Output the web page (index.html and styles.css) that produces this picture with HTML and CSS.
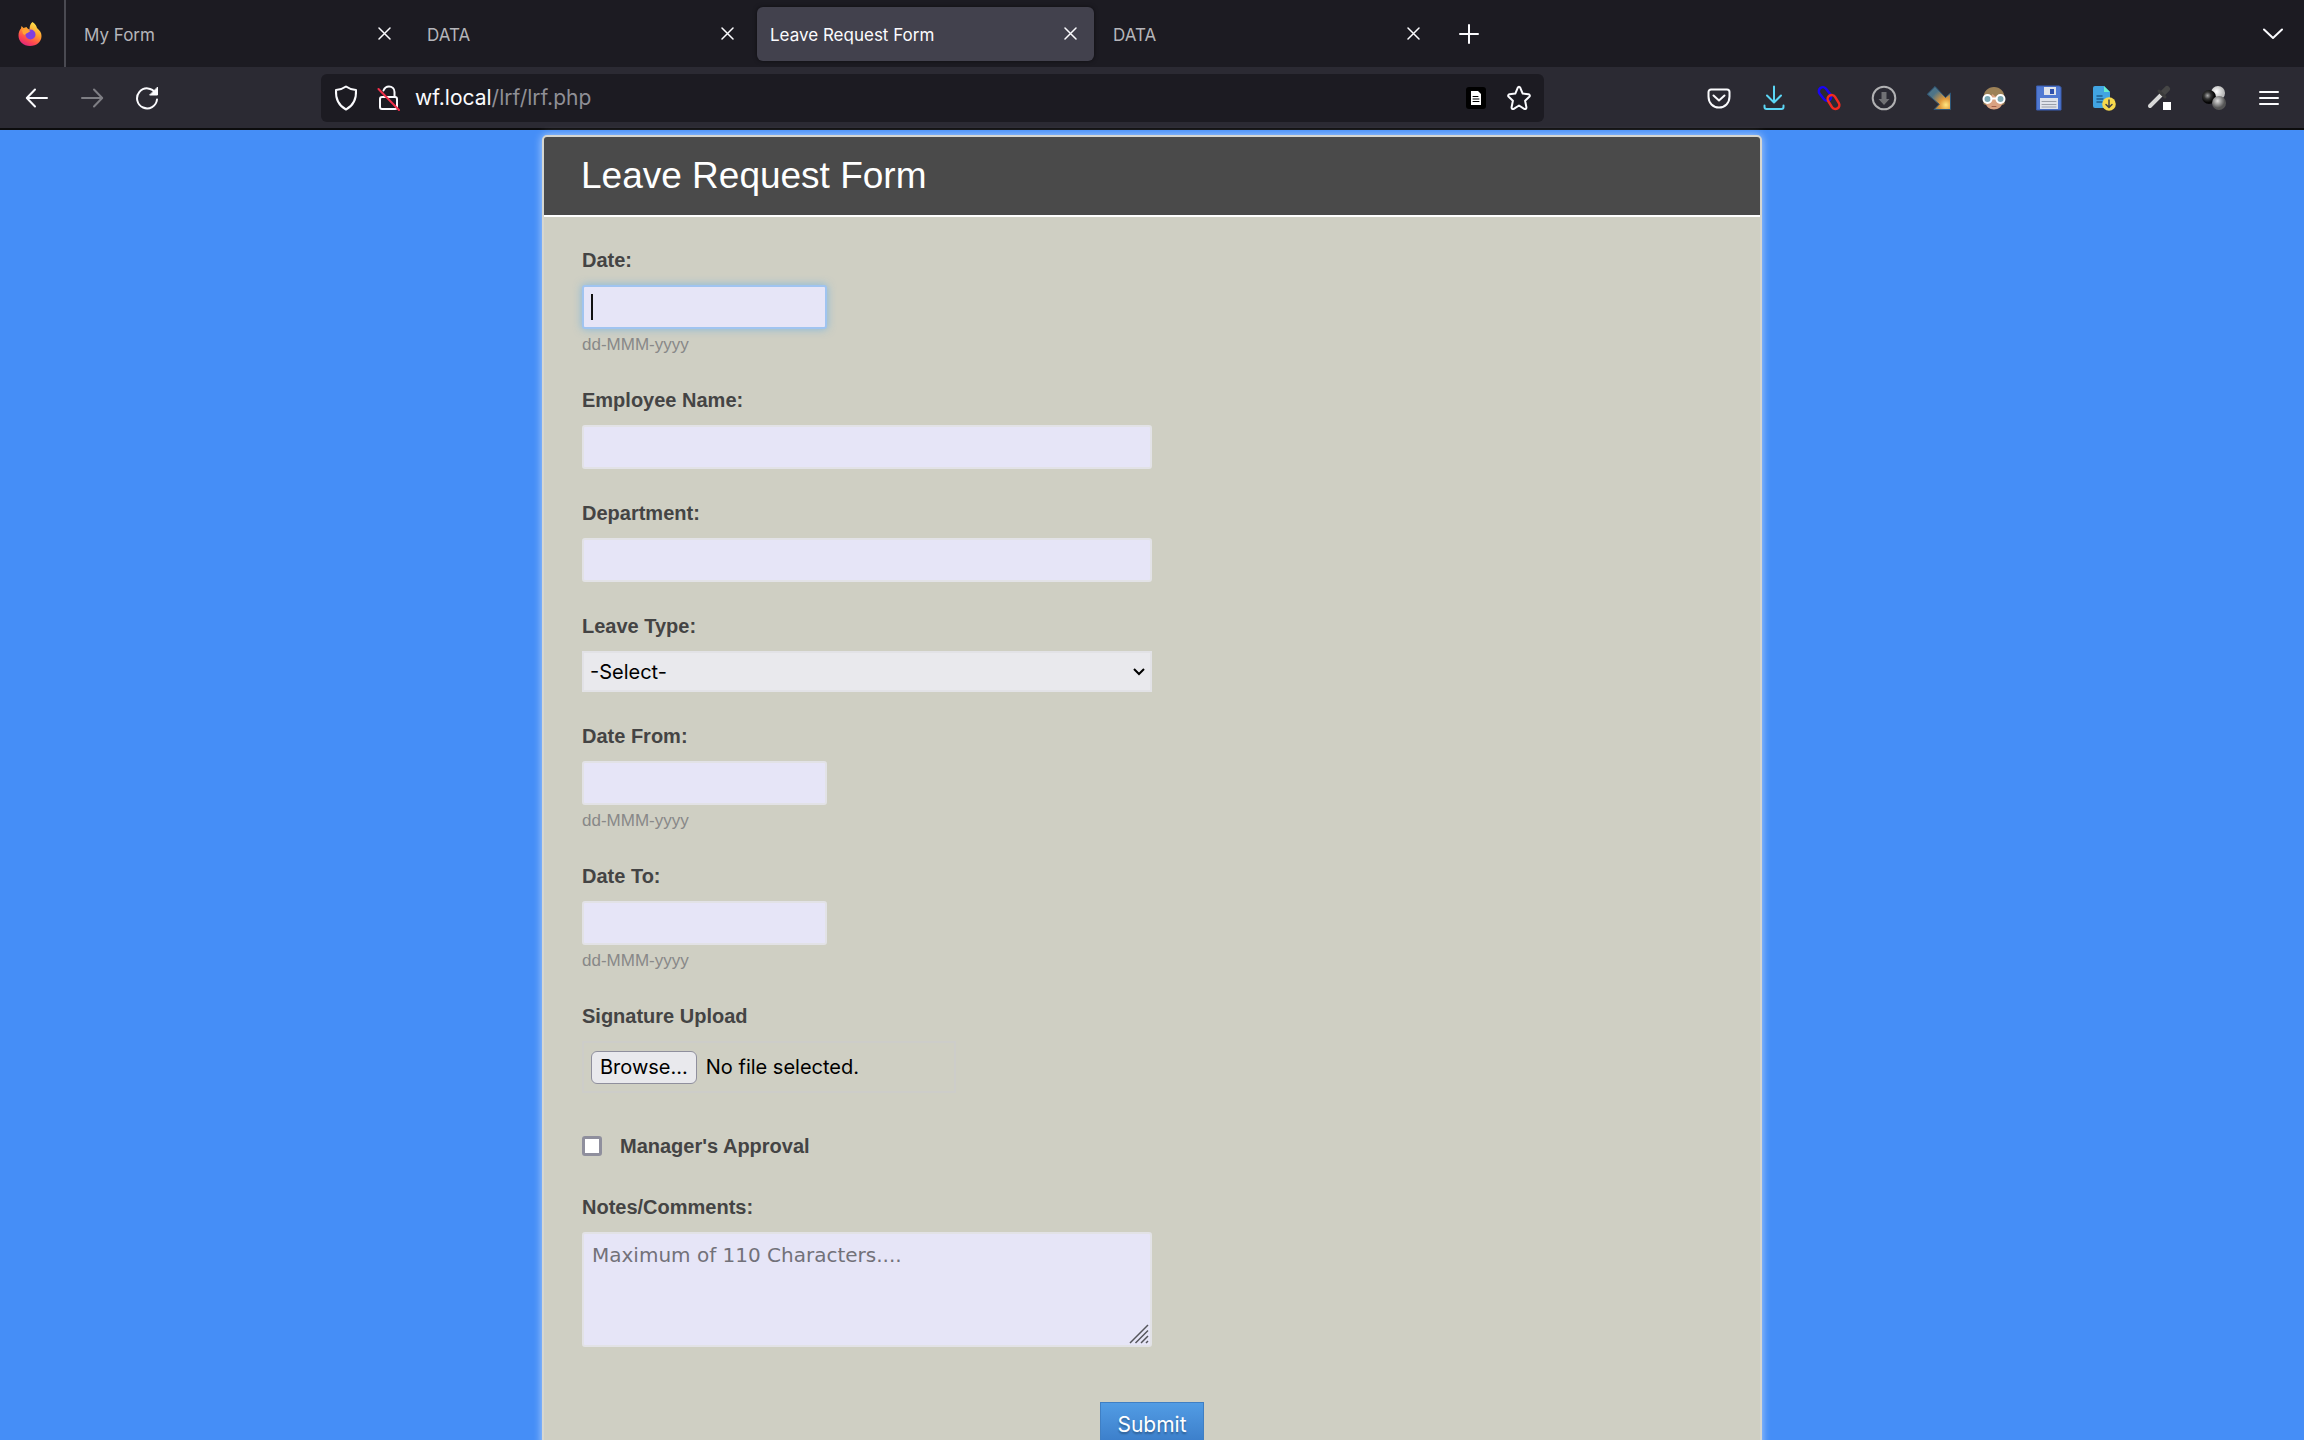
FILE: index.html
```html
<!DOCTYPE html>
<html lang="en">
<head>
    <meta charset="UTF-8">
    <meta name="viewport" content="width=device-width, initial-scale=1.0">
    <title>Leave Request Form</title>
    <link rel="stylesheet" href="styles.css">
</head>
<body>
    <header class="browser">
        <div class="tab-bar">
            <div class="logo">
                <svg width="24" height="26" viewBox="0 0 24 26">
                    <defs>
                        <linearGradient id="flame" x1="0.8" y1="0" x2="0.3" y2="1">
                            <stop offset="0" stop-color="#fff14f"/>
                            <stop offset="0.45" stop-color="#ff9a2e"/>
                            <stop offset="0.75" stop-color="#ff4b4e"/>
                            <stop offset="1" stop-color="#e0247d"/>
                        </linearGradient>
                    </defs>
                    <path fill="url(#flame)" d="M14.500 1c3 2 4 4 4.500 6 3 2.500 4.500 5 4.500 8 0 6-5 10-11.500 10S.500 20.500.500 14.500c0-3 1-5.500 2.500-7l.500-2.500 2 2 3-1c.500 1 1.500 2 3 2.500C11.500 5 12.500 2.500 14.500 1z"/>
                    <circle cx="12.500" cy="13.500" r="5" fill="#7f3fe0"/>
                    <path fill="#ffa436" d="M4 9c3-1.500 6-.500 8.500 1l-3 2c-1 .500-2 .500-2.500 2L5 13z"/>
                </svg>
            </div>
            <div class="tabs">
                <div class="tab"><span>My Form</span><button type="button" aria-label="Close tab"><svg width="13" height="13" viewBox="0 0 13 13"><path d="M1 1l11 11M12 1L1 12"/></svg></button></div>
                <div class="tab"><span>DATA</span><button type="button" aria-label="Close tab"><svg width="13" height="13" viewBox="0 0 13 13"><path d="M1 1l11 11M12 1L1 12"/></svg></button></div>
                <div class="tab active"><span>Leave Request Form</span><button type="button" aria-label="Close tab"><svg width="13" height="13" viewBox="0 0 13 13"><path d="M1 1l11 11M12 1L1 12"/></svg></button></div>
                <div class="tab"><span>DATA</span><button type="button" aria-label="Close tab"><svg width="13" height="13" viewBox="0 0 13 13"><path d="M1 1l11 11M12 1L1 12"/></svg></button></div>
            </div>
            <button type="button" class="icon-btn new-tab" aria-label="New tab"><svg width="20" height="20" viewBox="0 0 20 20"><path d="M10 1v18M1 10h18"/></svg></button>
            <button type="button" class="icon-btn all-tabs" aria-label="List all tabs"><svg width="20" height="12" viewBox="0 0 20 12"><path d="M1 1.500l9 8.500 9-8.500"/></svg></button>
        </div>

        <div class="toolbar">
            <button type="button" class="icon-btn" aria-label="Back"><svg width="24" height="24" viewBox="0 0 24 24"><path d="M22 12H2M10 3.500L1.800 12l8.200 8.500"/></svg></button>
            <button type="button" class="icon-btn dim" aria-label="Forward"><svg width="24" height="24" viewBox="0 0 24 24"><path d="M2 12h20M14 3.500l8.200 8.500-8.200 8.500"/></svg></button>
            <button type="button" class="icon-btn" aria-label="Reload"><svg width="24" height="24" viewBox="0 0 24 24"><path d="M20.500 7A10 10 0 1 0 22 13.500"/><path class="fill" d="M22.500 1.500v7.500H15z"/></svg></button>
            <div class="spacer"></div>
            <div class="url-bar">
                <svg width="24" height="26" viewBox="0 0 24 26"><path d="M12 1.500c3 2.200 6.500 3.300 10 3.500.500 8.500-2.500 15.500-10 19.500C4.500 20.500 1.500 13.500 2 5c3.500-.200 7-1.300 10-3.500z"/></svg>
                <svg class="lock" width="24" height="26" viewBox="0 0 24 26"><rect x="3" y="12" width="17" height="12" rx="2"/><path d="M6.500 5.500C7.500 3 9.500 1.500 12 1.500c3 0 5.500 2 5.500 5.500v5"/><path class="slash" d="M1.500 4l20.500 21"/></svg>
                <div class="url"><span class="host">wf.local</span>/lrf/lrf.php</div>
                <svg class="reader" width="20" height="22" viewBox="0 0 20 22"><rect width="20" height="22" rx="3"/><path class="sheet" d="M5 4h7l3 3v11H5z"/><path class="lines" d="M7 9.500h5M7 12h6M7 14.500h6"/></svg>
                <svg width="24" height="26" viewBox="0 0 24 26"><path d="M12 1.800c.600 0 1 .400 1.300 1l2.400 5.800 5.800.700c1.300.200 1.800 1.500.800 2.500l-4.200 4 1.300 6.400c.200 1.500-1 2.300-2.200 1.600L12 20.500l-5.200 3.300c-1.200.700-2.400-.100-2.200-1.600l1.300-6.400-4.200-4c-1-1-.500-2.300.800-2.500l5.800-.700 2.400-5.800c.300-.600.700-1 1.300-1z"/></svg>
            </div>
            <div class="spacer"></div>
            <button type="button" class="icon-btn" aria-label="Pocket"><svg width="24" height="24" viewBox="0 0 24 24"><path d="M4 3.500h16a2.500 2.500 0 0 1 2.500 2.500v4.500C22.500 17 18 21.500 12 21.500S1.500 17 1.500 10.500V6A2.500 2.500 0 0 1 4 3.500z"/><path d="M6.500 9.500l5.500 5 5.500-5"/></svg></button>
            <button type="button" class="icon-btn cyan" aria-label="Downloads"><svg width="24" height="26" viewBox="0 0 24 26"><path d="M12 1.500V17M5 10.500l7 7 7-7M2.500 20.500v1.500a2 2 0 0 0 2 2h15a2 2 0 0 0 2-2v-1.500"/></svg></button>
            <button type="button" class="icon-btn" aria-label="Link"><svg width="26" height="26" viewBox="0 0 26 26"><rect x="1.500" y="5" width="15" height="8" rx="4" transform="rotate(52 9 9)" stroke="#1a05f5" stroke-width="2.500"/><rect x="10" y="13" width="15" height="8" rx="4" transform="rotate(58 17.500 17)" stroke="#f22a20" stroke-width="2.500"/></svg></button>
            <button type="button" class="icon-btn" aria-label="Save page"><svg width="26" height="26" viewBox="0 0 26 26"><circle cx="13" cy="13" r="11.300" stroke="#b1b1b3"/><path fill="#717174" stroke="none" d="M10.500 7h5v7h3L13 20l-5.500-6h3z"/></svg></button>
            <button type="button" class="icon-btn" aria-label="Download manager"><svg width="26" height="26" viewBox="0 0 26 26">
                <defs>
                    <radialGradient id="glow" cx="0.8" cy="0.800" r="0.700">
                        <stop offset="0" stop-color="#ffe680"/>
                        <stop offset="0.400" stop-color="#e0983a"/>
                        <stop offset="1" stop-color="#4d7488"/>
                    </radialGradient>
                </defs>
                <path fill="url(#glow)" stroke="#2d5678" stroke-width="1" d="M1.500 9L9 1.500l10.500 11L24.500 8v16.500H8l5-5z"/></svg></button>
            <button type="button" class="icon-btn" aria-label="Account"><svg width="26" height="26" viewBox="0 0 26 26"><path fill="#9c8157" stroke="none" d="M2.500 13C2.500 6 7 2 13 2s10.500 4 10.500 11v6l-2 1h-17l-2-1z"/><path fill="#d9a282" stroke="none" d="M4.500 13c4 0 6-2 7-4 3 3 6 4 10 4v4c0 4.500-4 7.500-8.500 7.500S4.500 21.500 4.500 17z"/><circle cx="6.500" cy="14" r="4" fill="#7ba8b4" stroke="#fff"/><circle cx="19.500" cy="14" r="4" fill="#7ba8b4" stroke="#fff"/><path stroke="#fff" d="M10.500 13.500h5"/><path stroke="#a5604b" stroke-width="1" d="M11 21.500h4"/></svg></button>
            <button type="button" class="icon-btn" aria-label="Save"><svg width="26" height="26" viewBox="0 0 26 26"><path fill="#5079d2" stroke="#3b5fb5" stroke-width="1" d="M1 1h22.500L25 2.500V25H1z"/><path fill="#dfe3ea" stroke="none" d="M8 2h12v8H8zM4 13h18v11H4z"/><path fill="#2f51ad" stroke="none" d="M14 4h4v5h-4z"/><path stroke="#9aa0aa" stroke-width="1" d="M6 16.500h14M6 19.500h14M6 22h14"/></svg></button>
            <button type="button" class="icon-btn" aria-label="Export document"><svg width="26" height="26" viewBox="0 0 26 26"><path fill="#41a4e2" stroke="none" d="M4 1h9l6 6v16H4a2 2 0 0 1-2-2V3a2 2 0 0 1 2-2z"/><path fill="#67eccb" stroke="none" d="M13 1l6 6h-6z"/><path stroke="#1d5c8d" stroke-width="1.500" d="M6 11h5M6 14h6M6 17h5"/><circle cx="18" cy="19" r="6.800" fill="#f7d94c" stroke="none"/><path stroke="#42434a" stroke-width="1.500" d="M18 15v7M15 19.500l3 3 3-3"/></svg></button>
            <button type="button" class="icon-btn" aria-label="Colour picker"><svg width="26" height="26" viewBox="0 0 26 26"><path stroke="#d8d8d8" stroke-width="4" d="M4 21L15 10"/><path stroke="#464646" stroke-width="6" d="M17 8l4-4"/><path stroke="#3c3c3c" stroke-width="3" d="M13 6l6 6"/><path fill="#fff" stroke="none" d="M17 17h8v8h-8z"/></svg></button>
            <button type="button" class="icon-btn" aria-label="Spheres"><svg width="26" height="26" viewBox="0 0 26 26">
                <defs>
                    <radialGradient id="dark" cx="0.400" cy="0.400"><stop offset="0" stop-color="#aaa"/><stop offset="0.500" stop-color="#333"/><stop offset="1" stop-color="#050505"/></radialGradient>
                    <radialGradient id="light" cx="0.400" cy="0.400"><stop offset="0" stop-color="#fff"/><stop offset="1" stop-color="#bbb"/></radialGradient>
                    <radialGradient id="grey" cx="0.400" cy="0.350"><stop offset="0" stop-color="#ddd"/><stop offset="1" stop-color="#555"/></radialGradient>
                </defs>
                <circle cx="17" cy="8" r="7" fill="url(#light)" stroke="none"/><circle cx="8" cy="12" r="7" fill="url(#dark)" stroke="none"/><circle cx="18" cy="18" r="7" fill="url(#grey)" stroke="none"/></svg></button>
            <button type="button" class="icon-btn" aria-label="Menu"><svg width="20" height="18" viewBox="0 0 20 18"><path d="M1 3h18M1 9h18M1 15h18"/></svg></button>
        </div>
    </header>

    <main class="page">
        <div class="panel">
            <h1>Leave Request Form</h1>
            <form>
                <div class="field">
                    <label for="date">Date:</label>
                    <div class="caret-box">
                        <input type="text" id="date" class="short focused">
                        <span class="caret"></span>
                    </div>
                    <p class="hint">dd-MMM-yyyy</p>
                </div>
                <div class="field">
                    <label for="name">Employee Name:</label>
                    <input type="text" id="name">
                </div>
                <div class="field">
                    <label for="department">Department:</label>
                    <input type="text" id="department">
                </div>
                <div class="field">
                    <label for="type">Leave Type:</label>
                    <div class="select-box">
                        <select id="type">
                            <option>-Select-</option>
                        </select>
                        <svg width="12" height="8" viewBox="0 0 12 8"><path d="M1 1l5 5 5-5"/></svg>
                    </div>
                </div>
                <div class="field">
                    <label for="from">Date From:</label>
                    <input type="text" id="from" class="short">
                    <p class="hint">dd-MMM-yyyy</p>
                </div>
                <div class="field">
                    <label for="to">Date To:</label>
                    <input type="text" id="to" class="short">
                    <p class="hint">dd-MMM-yyyy</p>
                </div>
                <div class="field">
                    <label for="signature">Signature Upload</label>
                    <div class="upload">
                        <input type="file" id="signature" hidden>
                        <button type="button" onclick="document.getElementById('signature').click()">Browse...</button>
                        <span>No file selected.</span>
                    </div>
                </div>
                <div class="field check">
                    <input type="checkbox" id="approval">
                    <label for="approval">Manager's Approval</label>
                </div>
                <div class="field">
                    <label for="notes">Notes/Comments:</label>
                    <div class="notes-box">
                        <textarea id="notes" maxlength="110" placeholder="Maximum of 110 Characters...."></textarea>
                        <svg width="20" height="20" viewBox="0 0 20 20"><path d="M1 19L19 1M6.500 19L19 6.500M12 19l7-7M17 19l2-2"/></svg>
                    </div>
                </div>
                <div class="actions">
                    <button type="submit" class="submit">Submit</button>
                </div>
            </form>
        </div>
    </main>
</body>
</html>
```
FILE: styles.css
```css
* {
    box-sizing: border-box;
}

body {
    margin: 0;
    height: 100vh;
    display: flex;
    flex-direction: column;
    overflow: hidden;
    background: #458ef7;
    font-family: "Liberation Sans", Arial, sans-serif;
}

button {
    font-family: inherit;
    cursor: pointer;
}

/* Browser bars */
.browser {
    flex: none;
    font-family: Inter, sans-serif;
    color: #fbfbfe;
    border-bottom: 2px solid #0c0c0d;
}

.browser svg {
    flex: none;
    display: block;
    fill: none;
    stroke: #fbfbfe;
    stroke-width: 2;
    stroke-linecap: round;
    stroke-linejoin: round;
}

.tab-bar {
    display: flex;
    align-items: center;
    height: 67px;
    background: #1c1b22;
}

.logo {
    display: flex;
    align-items: center;
    justify-content: flex-end;
    width: 66px;
    height: 100%;
    padding-right: 22px;
    border-right: 2px solid #4a4a52;
}

.browser .logo svg {
    stroke: none;
}

.tabs {
    display: flex;
    flex: 0 1 1366px;
    gap: 6px;
    margin-left: 5px;
    margin-right: 12px;
}

.tab {
    flex: 1;
    display: flex;
    align-items: center;
    justify-content: space-between;
    height: 54px;
    padding: 0 12px 0 13px;
    border-radius: 6px;
    font-size: 17px;
    color: #b5b5ba;
}

.tab span {
    padding-top: 2px;
}

.tab.active {
    background: #42414d;
    color: #fbfbfe;
    box-shadow: 0 0 4px rgba(0, 0, 0, 0.5);
}

.tab button,
.icon-btn {
    display: flex;
    align-items: center;
    justify-content: center;
    padding: 0;
    border: none;
    background: none;
}

.tab button {
    width: 24px;
    height: 24px;
}

.browser .tab svg {
    stroke-width: 1.5;
}

.icon-btn {
    flex: none;
    width: 55px;
    height: 48px;
}

.new-tab {
    width: 40px;
}

.all-tabs {
    margin-left: auto;
    margin-right: 4px;
}

.toolbar {
    display: flex;
    align-items: center;
    height: 61px;
    padding: 0 8px 0 9px;
    background: #2b2a33;
}

.dim {
    opacity: 0.4;
}

.browser .cyan svg {
    stroke: #5bd6f5;
}

.browser .fill {
    fill: #fbfbfe;
    stroke-width: 1;
}

.spacer {
    flex: 0 1 147px;
}

.url-bar {
    flex: 1;
    display: flex;
    align-items: center;
    height: 48px;
    padding: 0 13px;
    border-radius: 6px;
    background: #1c1b22;
}

.url-bar .lock {
    margin: 0 14px 0 19px;
}

.lock .slash {
    stroke: #f2304a;
}

.url {
    flex: 1;
    font-size: 21px;
    color: #8f8f96;
}

.host {
    color: #fbfbfe;
}

.browser .reader {
    margin-right: 21px;
    fill: #000;
    stroke: none;
}

.reader .sheet {
    fill: #fff;
}

.reader .lines {
    stroke: #000;
    stroke-width: 1;
}

/* Form */
.page {
    flex: 1;
    min-height: 0;
    padding: 5px 20px 0;
}

.panel {
    max-width: 1220px;
    margin: 0 auto;
    border: 2px solid #d6d6d0;
    border-radius: 5px;
    background: #cfcfc3;
    box-shadow: 0 0 8px rgba(255, 255, 255, 0.6);
}

h1 {
    margin: 0;
    padding: 0 37px;
    border-bottom: 2px solid #fff;
    border-radius: 3px 3px 0 0;
    background: #4a4a4a;
    color: #fff;
    font-size: 37px;
    font-weight: normal;
    line-height: 78px;
}

form {
    display: flex;
    flex-direction: column;
    gap: 32px;
    padding: 31px 38px 40px;
}

.field label {
    display: block;
    margin-bottom: 13px;
    color: #444;
    font-size: 20px;
    font-weight: bold;
    line-height: 24px;
}

input[type="text"],
select,
textarea {
    display: block;
    width: 100%;
    max-width: 570px;
    height: 44px;
    margin: 0;
    padding: 8px;
    border: 2px solid #e2e2e6;
    border-radius: 3px;
    outline: none;
    background: #e6e5f7;
    color: #000;
    font-size: 20px;
}

input[type="text"].short {
    max-width: 245px;
}

input[type="text"].focused {
    border-color: #a0c4f0;
    box-shadow: 0 0 8px rgba(82, 168, 236, 0.6);
    caret-color: transparent;
}

.caret-box,
.select-box,
.notes-box {
    position: relative;
    max-width: 570px;
}

.caret {
    position: absolute;
    top: 9px;
    left: 9px;
    width: 2px;
    height: 26px;
    background: #111;
}

.hint {
    margin: 5px 0 0;
    color: #888;
    font-size: 17px;
    line-height: 22px;
}

.select-box select {
    appearance: none;
    height: 41px;
    padding: 0 6px;
    border-radius: 0;
    background: #e9e9ed;
    font-family: Inter, sans-serif;
}

.select-box svg {
    position: absolute;
    top: 17px;
    right: 7px;
    fill: none;
    stroke: #000;
    stroke-width: 2;
}

.upload {
    display: flex;
    align-items: center;
    gap: 9px;
    max-width: 374px;
    height: 52px;
    margin-bottom: 6px;
    padding: 0 7px;
    border: 2px solid #cdcdc9;
    font-family: Inter, sans-serif;
    font-size: 20px;
}

.upload button {
    height: 33px;
    padding: 0 8px;
    border: 1px solid #8f8f9d;
    border-radius: 6px;
    background: #e9e9ed;
    font-size: 20px;
}

.check {
    display: flex;
    align-items: center;
    gap: 18px;
    height: 30px;
    margin-bottom: 2px;
}

.check label {
    margin: 0;
}

.check input {
    appearance: none;
    width: 20px;
    height: 20px;
    margin: 0;
    border: 3px solid #8f8f9d;
    border-radius: 3px;
    background: #fff;
}

.check input:checked {
    background: #0060df;
}

.notes-box textarea {
    height: 115px;
    resize: none;
    font-family: "DejaVu Sans", Verdana, sans-serif;
    line-height: 26px;
}

textarea::placeholder {
    color: #727179;
}

.notes-box svg {
    position: absolute;
    right: 3px;
    bottom: 3px;
    stroke: #55555c;
    stroke-width: 1.5;
}

.actions {
    padding-top: 23px;
    text-align: center;
}

.submit {
    height: 44px;
    padding: 0 16px;
    border: 1px solid #3f7fc4;
    background: linear-gradient(#529ce4, #3a7cc8);
    color: #fff;
    font-family: Inter, sans-serif;
    font-size: 21px;
    text-shadow: 0 2px 2px rgba(0, 0, 0, 0.3);
}
```
